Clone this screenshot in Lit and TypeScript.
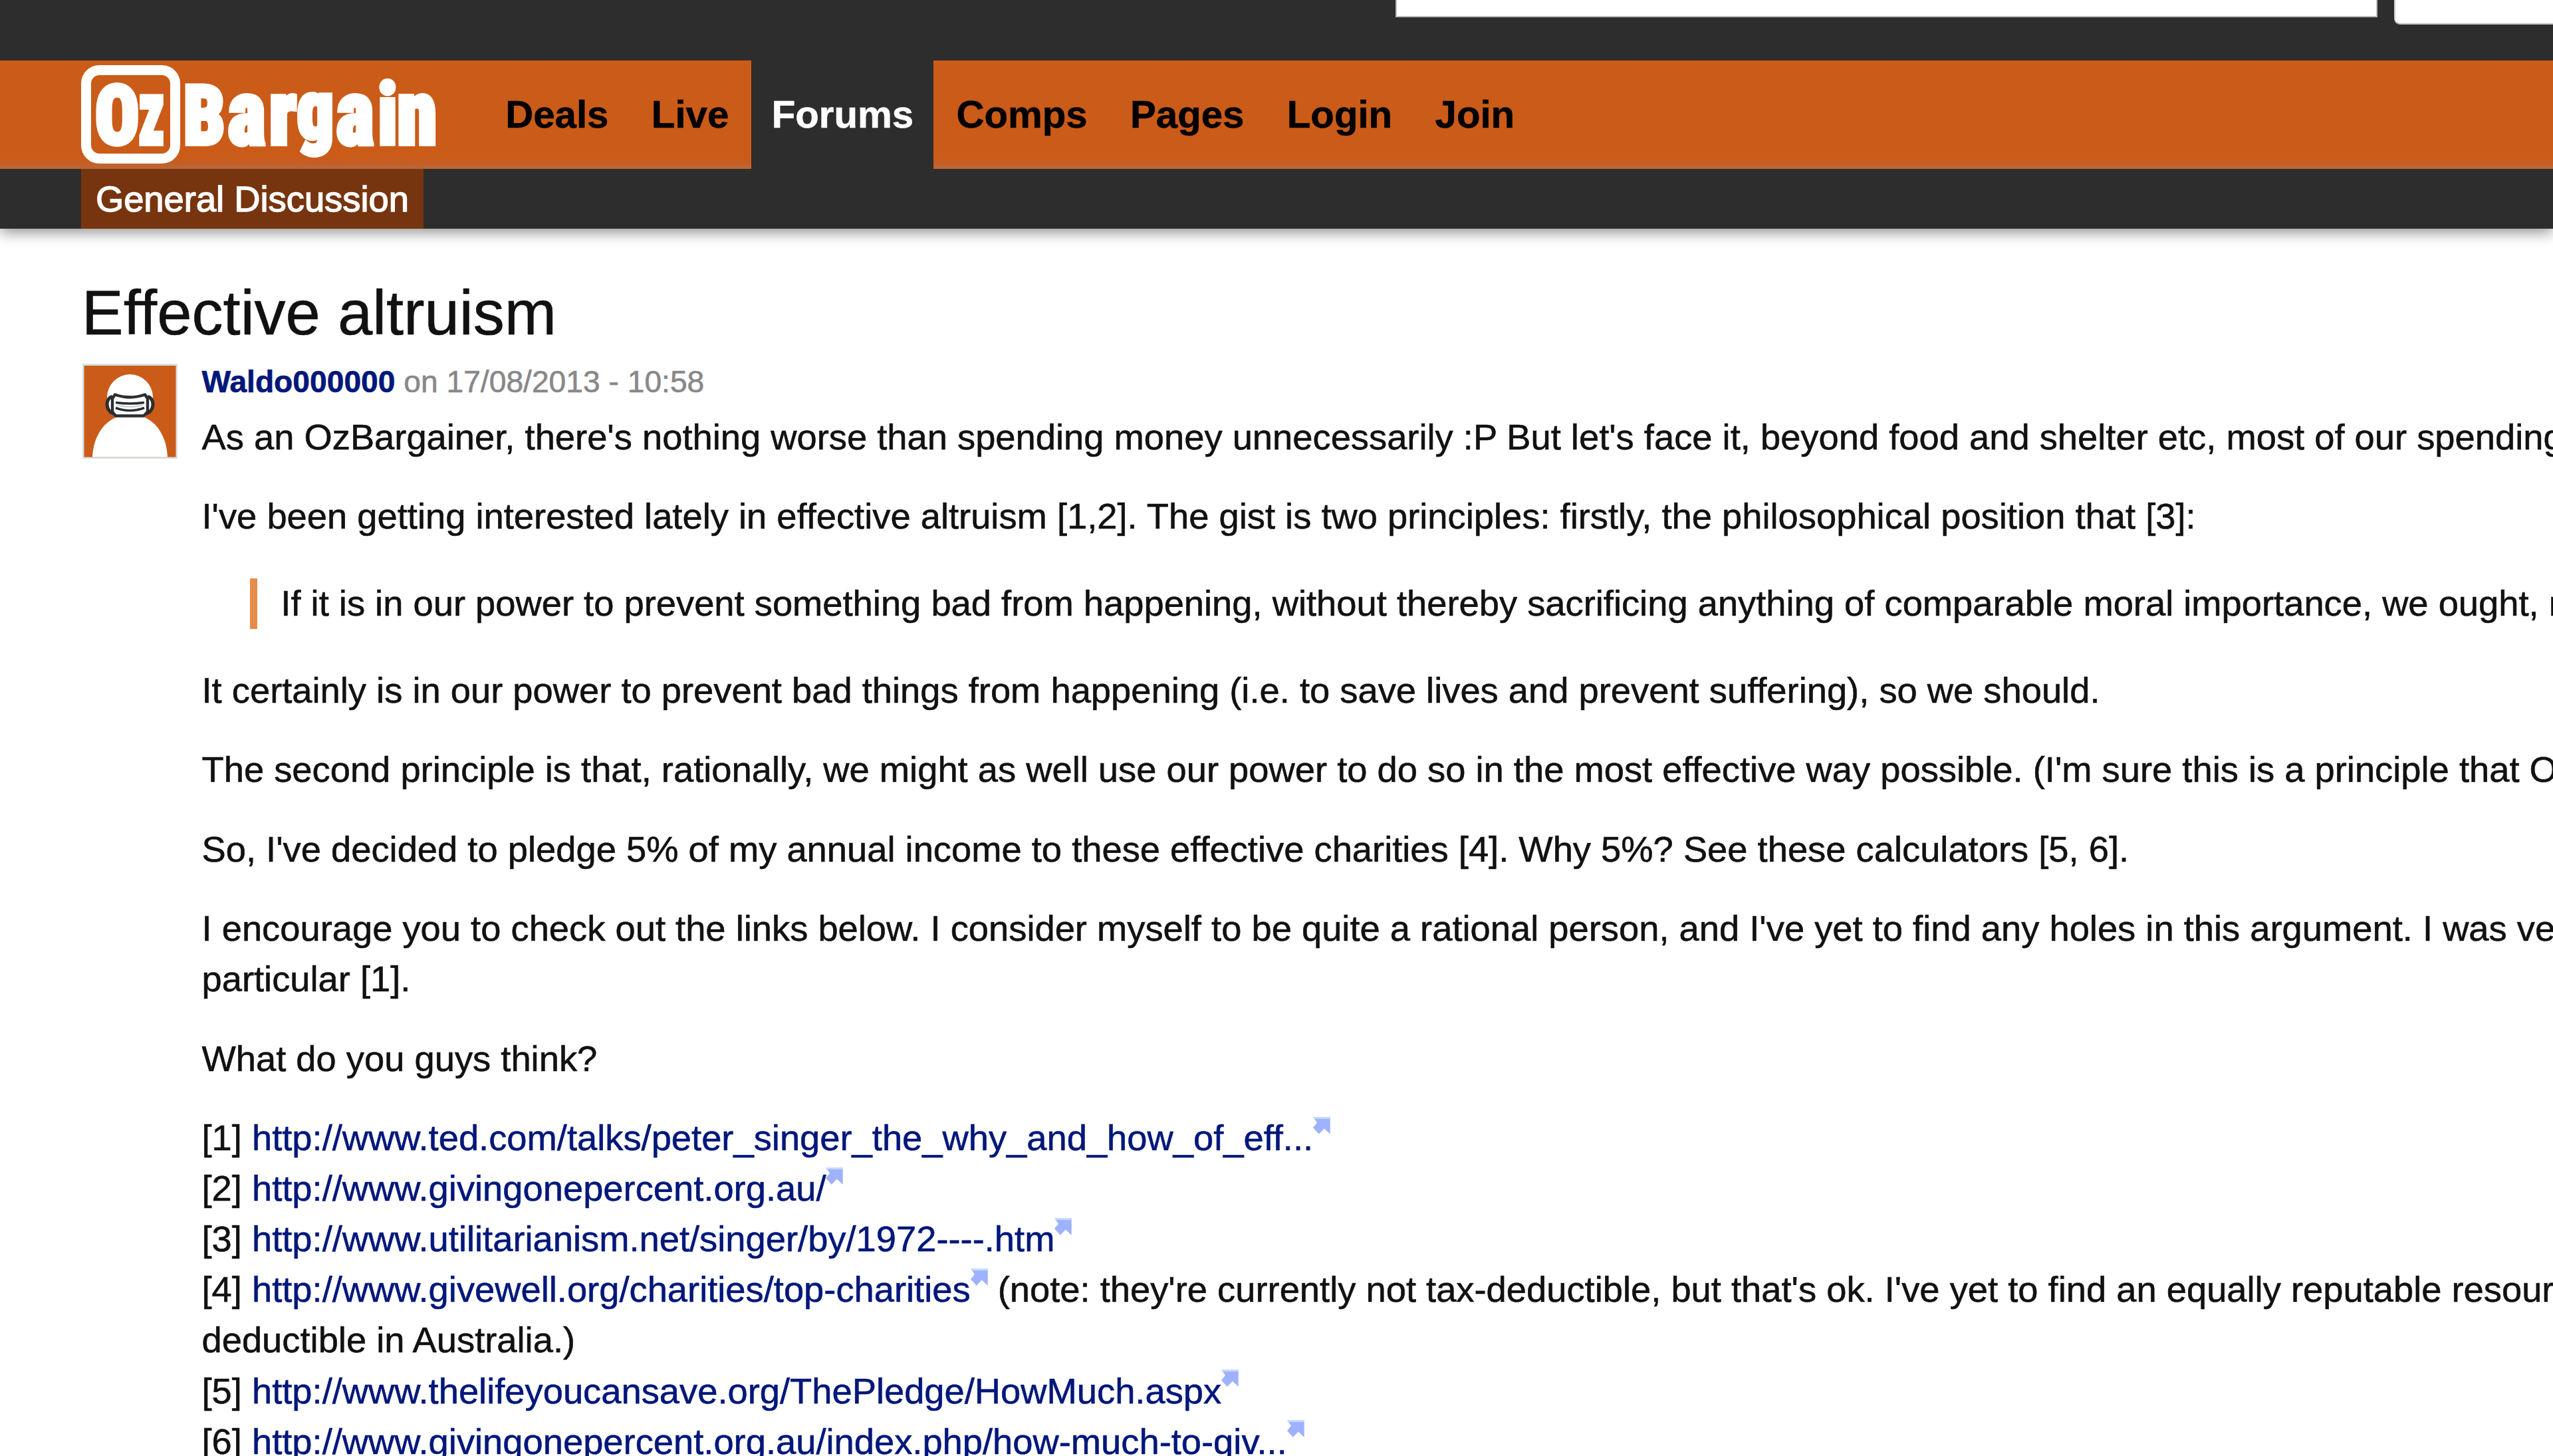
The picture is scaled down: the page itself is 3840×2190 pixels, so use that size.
import { html, svg, css, LitElement } from 'lit';
import { property } from 'lit/decorators.js';
import { classMap } from 'lit/directives/class-map.js';

export class ExternalLink extends LitElement {
  static styles = css`
    :host {
      color: #00177a;
    }

    .icon {
      width: 26px;
      height: 26px;
      vertical-align: 24.6px;
    }
  `;

  @property({ type: String }) text = '';

  render() {
    return html`<span>${this.text}</span><svg class="icon" viewBox="0 0 26 26">
        <path fill="#9fb2ff" d="M0 0H25.7V25.7L16.8 17.6L8.8 25.7L0 16L6 8.8Z" />
        <path fill="#c3d9ff" d="M0 0H25.7V3H2Z" />
      </svg>`;
  }
}
window.customElements.define('external-link', ExternalLink);

export class SiteHeader extends LitElement {
  static styles = css`
    :host {
      display: block;
    }

    .top {
      display: flex;
      justify-content: flex-end;
      align-items: flex-start;
      gap: 25px;
      height: 91px;
      background: #2d2d2d;
    }

    .search {
      box-sizing: border-box;
      width: 1477px;
      height: 26px;
      background: white;
      border: 2px solid #bbb;
      border-top: none;
    }

    .search-button {
      box-sizing: border-box;
      width: 239px;
      height: 37px;
      background: white;
      border-bottom: 2px solid #bbb;
      border-left: 2px solid #ccc;
      border-bottom-left-radius: 9px;
    }

    .bar {
      display: flex;
      height: 163px;
      padding-left: 122px;
      background: linear-gradient(#d25d17, #cb5b18 6px, #cb5b18 145px, #c45f24 154px, #ba6837);
    }

    .logo {
      width: 608px;
      height: 163px;
    }

    .logo-text {
      font-family: Roboto, sans-serif;
      font-weight: 900;
      font-stretch: condensed;
      fill: white;
      stroke: white;
      stroke-width: 6px;
    }

    .nav {
      display: flex;
      gap: 4px;
    }

    .nav-item {
      padding: 0 30.2px;
      color: black;
      font-size: 58.2px;
      font-weight: bold;
      line-height: 162px;
    }

    .active {
      background: #2d2d2d;
      color: white;
    }

    .sub {
      display: flex;
      height: 90px;
      padding-left: 122px;
      background: #2d2d2d;
      box-shadow: 0 6px 20px rgba(0, 0, 0, 0.42);
      clip-path: inset(0 0 -40px 0);
    }

    .sub-item {
      padding: 0 21.9px;
      background: #77350f;
      color: white;
      font-size: 54.34px;
      line-height: 92px;
      height: 90px;
      -webkit-text-stroke: 1.4px white;
    }
  `;

  @property({ type: String }) current = 'Forums';

  items = ['Deals', 'Live', 'Forums', 'Comps', 'Pages', 'Login', 'Join'];

  render() {
    return html`
      <div class="top">
        <div class="search"></div>
        <div class="search-button"></div>
      </div>
      <div class="bar">
        <svg class="logo" viewBox="0 0 608 163">
          <rect x="7.5" y="14.5" width="134" height="133" rx="20" fill="none" stroke="white" stroke-width="15" />
          <text class="logo-text" transform="scale(0.88 1)" x="24" y="126" font-size="125">O</text>
          <text class="logo-text" transform="scale(0.62 1)" x="139" y="126" font-size="138">z</text>
          <text class="logo-text" transform="scale(0.88 1)" y="126" font-size="138"><tspan x="175" font-size="125">B</tspan><tspan x="251 321">ar</tspan><tspan x="369" dy="-9" font-size="124">g</tspan><tspan x="436" dy="9">a</tspan><tspan x="507" font-size="128">i</tspan><tspan x="540">n</tspan></text>
        </svg>
        <div class="nav">
          ${this.items.map(item => html`
            <div class=${classMap({ 'nav-item': true, active: item === this.current })}>${item}</div>`)}
        </div>
      </div>
      <div class="sub">
        <div class="sub-item">General Discussion</div>
      </div>
    `;
  }
}
window.customElements.define('site-header', SiteHeader);

const maskLines = svg`
  <path d="M47 44Q69 52 92 44L96 50V70L90 76H48L43 70V50Z" fill="white" stroke="#2b2d30" stroke-width="4.4" stroke-linejoin="round" />
  <path d="M43 47C32 50 32 68 45 73M96 47C107 50 107 68 94 73" fill="none" stroke="#2b2d30" stroke-width="5" />
  <path d="M48 56Q69 59 91 56M48 64Q69 72 91 64" fill="none" stroke="#2b2d30" stroke-width="3.6" />
  <path d="M50 60Q69 65 89 60" fill="none" stroke="#cfd1d3" stroke-width="2" />
`;

export class AppRoot extends LitElement {
  static styles = css`
    :host {
      display: block;
      height: 2190px;
      overflow: hidden;
      background: white;
      font-family: 'Liberation Sans', Arial, sans-serif;
      font-size: 54.32px;
      line-height: 76.07px;
      color: #111;
      -webkit-text-stroke: 0.6px;
    }

    .page {
      padding: 70.1px 0 0 123px;
    }

    .title {
      margin: 0;
      font-size: 94px;
      font-weight: normal;
      line-height: 113px;
    }

    .post {
      display: flex;
      margin-top: 14.5px;
    }

    .avatar {
      flex: none;
      width: 143px;
      height: 143px;
      margin: 5.5px 37px 0 0.5px;
    }

    .content {
      white-space: nowrap;
    }

    .meta {
      margin-bottom: 13.7px;
      color: #888;
      font-size: 46.2px;
      line-height: 64.7px;
    }

    .author {
      color: #00177a;
      font-weight: bold;
    }

    p {
      margin: 0 0 43.4px;
    }

    .quote {
      margin: 54.8px 0 54.5px 72.8px;
      padding-left: 35px;
      border-left: 11px solid #e68c4a;
    }
  `;

  render() {
    return html`
      <site-header></site-header>
      <div class="page">
        <h1 class="title">Effective altruism</h1>
        <div class="post">
          <svg class="avatar" viewBox="0 0 143 143">
            <rect width="143" height="143" fill="#d9dfe3" />
            <rect x="2.5" y="3" width="138" height="137.5" fill="#cb5b18" />
            <ellipse cx="71.5" cy="51" rx="34.5" ry="35" fill="white" />
            <path d="M15 140.5C17 98 44 76 72 76S126 98 128 140.5Z" fill="white" />
            <g transform="translate(2 2.5)">${maskLines}</g>
          </svg>
          <div class="content">
            <div class="meta"><span class="author">Waldo000000</span> on 17/08/2013 - 10:58</div>
            <p>As an OzBargainer, there's nothing worse than spending money unnecessarily :P But let's face it, beyond food and shelter etc, most of our spending</p>
            <p>I've been getting interested lately in effective altruism [1,2]. The gist is two principles: firstly, the philosophical position that [3]:</p>
            <div class="quote">If it is in our power to prevent something bad from happening, without thereby sacrificing anything of comparable moral importance, we ought, m</div>
            <p>It certainly is in our power to prevent bad things from happening (i.e. to save lives and prevent suffering), so we should.</p>
            <p>The second principle is that, rationally, we might as well use our power to do so in the most effective way possible. (I'm sure this is a principle that O</p>
            <p>So, I've decided to pledge 5% of my annual income to these effective charities [4]. Why 5%? See these calculators [5, 6].</p>
            <p>I encourage you to check out the links below. I consider myself to be quite a rational person, and I've yet to find any holes in this argument. I was ve<br>particular [1].</p>
            <p>What do you guys think?</p>
            <p>
              [1] <external-link text="http://www.ted.com/talks/peter_singer_the_why_and_how_of_eff..."></external-link><br>
              [2] <external-link text="http://www.givingonepercent.org.au/"></external-link><br>
              [3] <external-link text="http://www.utilitarianism.net/singer/by/1972----.htm"></external-link><br>
              [4] <external-link text="http://www.givewell.org/charities/top-charities"></external-link> (note: they're currently not tax-deductible, but that's ok. I've yet to find an equally reputable resour<br>
              deductible in Australia.)<br>
              [5] <external-link text="http://www.thelifeyoucansave.org/ThePledge/HowMuch.aspx"></external-link><br>
              [6] <external-link text="http://www.givingonepercent.org.au/index.php/how-much-to-giv..."></external-link>
            </p>
          </div>
        </div>
      </div>
    `;
  }
}
window.customElements.define('app-root', AppRoot);
